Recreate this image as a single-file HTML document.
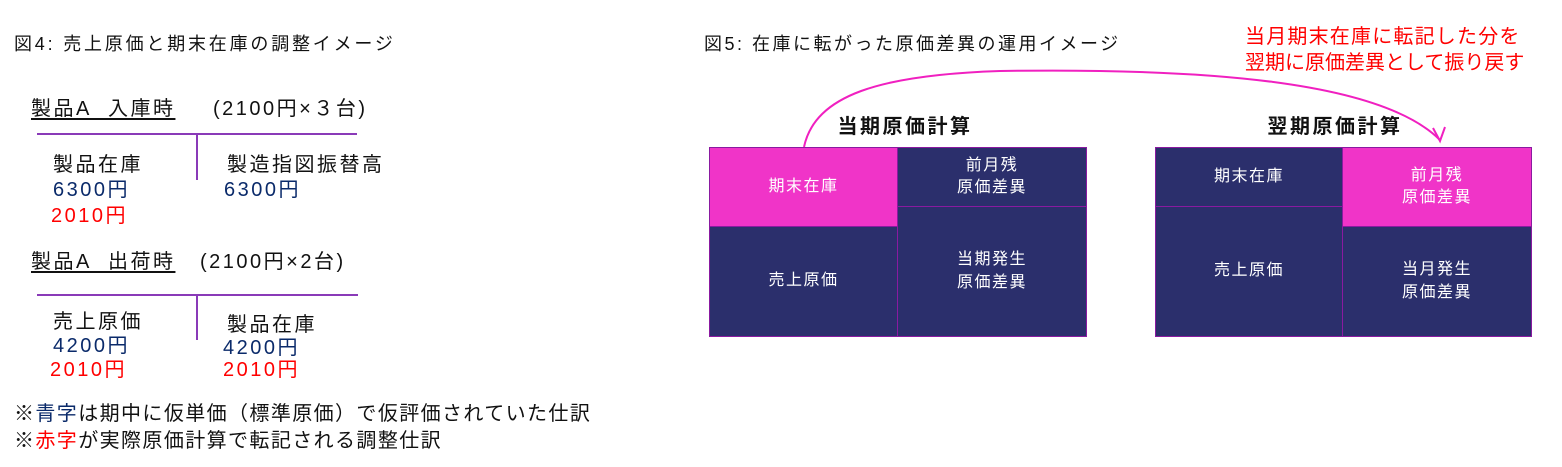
<!DOCTYPE html>
<html><head><meta charset="utf-8"><style>
body{margin:0;width:1562px;height:467px;background:#fff;position:relative;overflow:hidden;font-family:"Liberation Sans","Noto Sans CJK JP",sans-serif;color:#111}
.t{position:absolute;white-space:nowrap;line-height:1}
.s19{font-size:20px;letter-spacing:2.5px}
.b{color:#0a2a6a}.r{color:#ff0000}
.box{position:absolute;background:#2b2f6c;border:1px solid #8a1aa0;box-sizing:border-box;color:#fff;font-size:16px;letter-spacing:1.5px;display:flex;align-items:center;justify-content:center;text-align:center;line-height:1.4}
.pk{background:#f034c8}
.hl{position:absolute;height:2px;background:#8a3ab8}
.vl{position:absolute;width:2px;background:#8a3ab8}
.hd{position:absolute;font-size:20px;font-weight:bold;letter-spacing:2.5px;text-align:center;width:300px;line-height:1}
</style></head><body>
<div class="t" style="left:14px;top:35px;font-size:18px;letter-spacing:2.8px">図4: 売上原価と期末在庫の調整イメージ</div>
<div class="t s19" style="left:31px;top:99px;text-decoration:underline;text-underline-offset:3px">製品A&nbsp;&nbsp;入庫時</div>
<div class="t s19" style="left:213px;top:99px">(2100円×３台)</div>
<div class="hl" style="left:37px;top:133px;width:320px"></div>
<div class="vl" style="left:196px;top:134px;height:46px"></div>
<div class="t s19" style="left:53px;top:155px">製品在庫</div>
<div class="t s19 b" style="left:53px;top:180px">6300円</div>
<div class="t s19 r" style="left:51px;top:206px">2010円</div>
<div class="t s19" style="left:227px;top:155px">製造指図振替高</div>
<div class="t s19 b" style="left:224px;top:180px">6300円</div>
<div class="t s19" style="left:31px;top:252px;text-decoration:underline;text-underline-offset:3px">製品A&nbsp;&nbsp;出荷時</div>
<div class="t s19" style="left:200px;top:252px">(2100円×2台)</div>
<div class="hl" style="left:37px;top:294px;width:321px"></div>
<div class="vl" style="left:196px;top:295px;height:45px"></div>
<div class="t s19" style="left:53px;top:312px">売上原価</div>
<div class="t s19 b" style="left:53px;top:336px">4200円</div>
<div class="t s19 r" style="left:50px;top:360px">2010円</div>
<div class="t s19" style="left:227px;top:315px">製品在庫</div>
<div class="t s19 b" style="left:223px;top:338px">4200円</div>
<div class="t s19 r" style="left:223px;top:360px">2010円</div>
<div class="t s19" style="left:14px;top:404px;letter-spacing:1.4px">※<span class="b">青字</span>は期中に仮単価（標準原価）で仮評価されていた仕訳</div>
<div class="t s19" style="left:14px;top:431px;letter-spacing:1.4px">※<span class="r">赤字</span>が実際原価計算で転記される調整仕訳</div>

<div class="t" style="left:704px;top:35px;font-size:18px;letter-spacing:2.5px">図5: 在庫に転がった原価差異の運用イメージ</div>
<div class="t r" style="left:1245px;top:27px;font-size:20px;letter-spacing:1.2px">当月期末在庫に転記した分を</div>
<div class="t r" style="left:1245px;top:53px;font-size:20px;letter-spacing:0px">翌期に原価差異として振り戻す</div>
<div class="hd" style="left:755px;top:117px">当期原価計算</div>
<div class="hd" style="left:1185px;top:117px">翌期原価計算</div>

<div class="box pk" style="left:709px;top:147px;width:189px;height:80px">期末在庫</div>
<div class="box" style="left:709px;top:226px;width:189px;height:111px">売上原価</div>
<div class="box" style="left:897px;top:147px;width:190px;height:60px">前月残<br>原価差異</div>
<div class="box" style="left:897px;top:206px;width:190px;height:131px">当期発生<br>原価差異</div>

<div class="box" style="left:1155px;top:147px;width:188px;height:60px">期末在庫</div>
<div class="box" style="left:1155px;top:206px;width:188px;height:131px">売上原価</div>
<div class="box pk" style="left:1342px;top:147px;width:190px;height:80px">前月残<br>原価差異</div>
<div class="box" style="left:1342px;top:226px;width:190px;height:111px">当月発生<br>原価差異</div>

<svg style="position:absolute;left:0;top:0" width="1562" height="467">
<path d="M804 147 C 815 95, 880 75, 1000 71 C 1200 68, 1380 80, 1440 140" fill="none" stroke="#f020c0" stroke-width="2"/>
<path d="M1433 128 L1440 141 L1445 127" fill="none" stroke="#f020c0" stroke-width="2"/>
</svg>
</body></html>
